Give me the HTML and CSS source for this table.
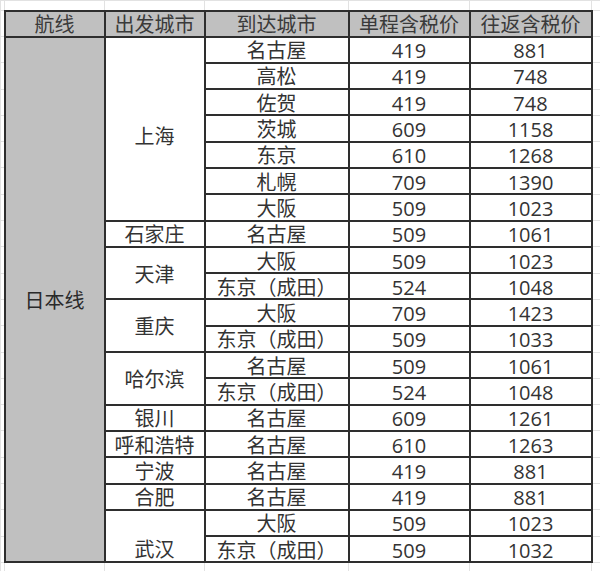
FILE: index.html
```html
<!DOCTYPE html>
<html lang="zh">
<head>
<meta charset="utf-8">
<title>日本线</title>
<link rel="stylesheet" href="styles.css">
</head>
<body>
<table class="sheet">
  <colgroup>
    <col class="c-edge-l">
    <col class="c-route">
    <col class="c-from">
    <col class="c-to">
    <col class="c-one">
    <col class="c-round">
    <col class="c-edge-r">
  </colgroup>
  <tr class="r-top"><td class="g"></td><td class="g"></td><td class="g"></td><td class="g"></td><td class="g"></td><td class="g"></td><td class="g"></td></tr>
  <tr class="r-head">
    <td class="g"></td>
    <th>航线</th><th>出发城市</th><th>到达城市</th><th>单程含税价</th><th>往返含税价</th>
    <td class="g"></td>
  </tr>
  <tr class="r"><td class="g"></td><td class="route" rowspan="20">日本线</td><td rowspan="7" class="city sh">上海</td><td>名古屋</td><td>419</td><td>881</td><td class="g"></td></tr>
  <tr class="r"><td class="g"></td><td>高松</td><td>419</td><td>748</td><td class="g"></td></tr>
  <tr class="r"><td class="g"></td><td>佐贺</td><td>419</td><td>748</td><td class="g"></td></tr>
  <tr class="r"><td class="g"></td><td>茨城</td><td>609</td><td>1158</td><td class="g"></td></tr>
  <tr class="r"><td class="g"></td><td>东京</td><td>610</td><td>1268</td><td class="g"></td></tr>
  <tr class="r"><td class="g"></td><td>札幌</td><td>709</td><td>1390</td><td class="g"></td></tr>
  <tr class="r"><td class="g"></td><td>大阪</td><td>509</td><td>1023</td><td class="g"></td></tr>
  <tr class="r"><td class="g"></td><td>石家庄</td><td>名古屋</td><td>509</td><td>1061</td><td class="g"></td></tr>
  <tr class="r"><td class="g"></td><td rowspan="2">天津</td><td>大阪</td><td>509</td><td>1023</td><td class="g"></td></tr>
  <tr class="r"><td class="g"></td><td>东京（成田）</td><td>524</td><td>1048</td><td class="g"></td></tr>
  <tr class="r"><td class="g"></td><td rowspan="2">重庆</td><td>大阪</td><td>709</td><td>1423</td><td class="g"></td></tr>
  <tr class="r"><td class="g"></td><td>东京（成田）</td><td>509</td><td>1033</td><td class="g"></td></tr>
  <tr class="r"><td class="g"></td><td rowspan="2">哈尔滨</td><td>名古屋</td><td>509</td><td>1061</td><td class="g"></td></tr>
  <tr class="r"><td class="g"></td><td>东京（成田）</td><td>524</td><td>1048</td><td class="g"></td></tr>
  <tr class="r"><td class="g"></td><td>银川</td><td>名古屋</td><td>609</td><td>1261</td><td class="g"></td></tr>
  <tr class="r"><td class="g"></td><td>呼和浩特</td><td>名古屋</td><td>610</td><td>1263</td><td class="g"></td></tr>
  <tr class="r"><td class="g"></td><td>宁波</td><td>名古屋</td><td>419</td><td>881</td><td class="g"></td></tr>
  <tr class="r"><td class="g"></td><td>合肥</td><td>名古屋</td><td>419</td><td>881</td><td class="g"></td></tr>
  <tr class="r"><td class="g"></td><td rowspan="2" class="bottom">武汉</td><td>大阪</td><td>509</td><td>1023</td><td class="g"></td></tr>
  <tr class="r"><td class="g"></td><td>东京（成田）</td><td>509</td><td>1032</td><td class="g"></td></tr>
  <tr class="r-bot"><td class="g"></td><td class="g"></td><td class="g"></td><td class="g"></td><td class="g"></td><td class="g"></td><td class="g"></td></tr>
</table>
</body>
</html>
```
FILE: styles.css
```css
html, body {
  margin: 0;
  padding: 0;
  background: #ffffff;
  overflow: hidden;
}

.sheet {
  border-collapse: collapse;
  table-layout: fixed;
  width: 600px;
  font-family: "Open Sans", "Noto Sans CJK SC", sans-serif;
  font-size: 20px;
  line-height: 1;
  color: #333333;
}

.c-edge-l { width: 4px; }
.c-route { width: 100px; }
.c-from { width: 100px; }
.c-to { width: 144px; }
.c-one { width: 121px; }
.c-round { width: 122px; }
.c-edge-r { width: 9px; }

.r-top { height: 10px; }
.r-head { height: 26px; }
.r { height: 26.3px; }
.r-bot { height: 12px; }

.sheet td,
.sheet th {
  border: 2px solid #2e2e2e;
  padding: 3px 0 0 0;
  text-align: center;
  vertical-align: middle;
  white-space: nowrap;
  font-weight: 400;
  overflow: hidden;
}

.sheet th {
  background: #c0c0c0;
  color: #3a3a3a;
}

.sheet td.g {
  border: 1px solid #e2e2e2;
  padding: 0;
  background: #ffffff;
}

.sheet td.route {
  background: #c0c0c0;
  color: #2a2a2a;
}

.sheet td.sh {
  padding-top: 16px;
}

.sheet td.bottom {
  vertical-align: bottom;
  padding-bottom: 1px;
}
```
